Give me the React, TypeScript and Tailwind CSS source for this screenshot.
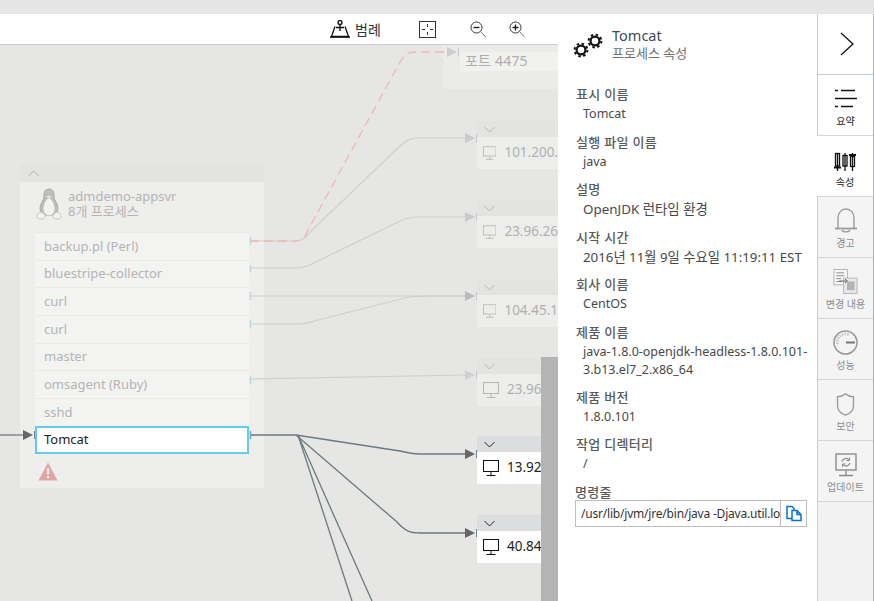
import React from "react";

const Monitor = ({ c }: { c: string }) => (
  <svg width="16" height="17" viewBox="0 0 16 17" fill="none" stroke={c} strokeWidth="1">
    <rect x="0.5" y="0.5" width="15" height="11" />
    <path d="M8 12v4M3.5 15.5h9" />
  </svg>
);

const nodes = [
  { top: 76, ip: "101.200.", dim: true },
  { top: 155, ip: "23.96.26", dim: true },
  { top: 234, ip: "104.45.1", dim: true },
  { top: 313, ip: "23.96.", dim: true },
  { top: 391, ip: "13.92.", dim: false },
  { top: 470, ip: "40.84.", dim: false },
];

const NodeCard = ({ top, ip, dim }: { top: number; ip: string; dim: boolean }) => (
  <div className="absolute left-[477px] w-[81px] overflow-hidden" style={{ top }}>
    <div className={`h-[16px] pl-[7px] flex items-center ${dim ? "bg-[#e3e3e1]" : "bg-[#dcdddf]"}`}>
      <svg width="11" height="7" viewBox="0 0 11 7" fill="none" stroke={dim ? "#b5b5b5" : "#222"} strokeWidth="1">
        <path d="M0.5 1 5.5 6 10.5 1" />
      </svg>
    </div>
    <div className={`h-[32px] pl-[6px] flex items-center gap-[8px] text-[13.5px] ${dim ? "bg-[#edeeec] text-[#b0b0b0]" : "bg-white text-[#222]"}`}>
      <Monitor c={dim ? "#b5b5b5" : "#111"} />
      <span className="whitespace-nowrap mb-[2px]">{ip}</span>
    </div>
  </div>
);

const rows = ["backup.pl (Perl)", "bluestripe-collector", "curl", "curl", "master", "omsagent (Ruby)", "sshd"];

const Arrow = ({ x, y, c }: { x: number; y: number; c: string }) => (
  <g>
    <path d={`M${x} ${y - 5}L${x + 10} ${y}L${x} ${y + 5}Z`} fill={c} />
    <path d={`M${x + 11.5} ${y - 4}V${y + 4}`} stroke={c === "#666" ? "#6d8594" : "#c2cad0"} strokeWidth="1" />
  </g>
);

const Graph = () => (
  <svg className="absolute left-0 top-0" width="558" height="556" viewBox="0 45 558 556" fill="none">
    <g stroke="#cfcfcd" strokeWidth="1.2">
      <path d="M250 241H295C304 241 306 236 310 232L400 146C408 139 412 138 420 138H466" />
      <path d="M250 268H295C305 268 310 265 320 260L398 222C406 218 410 217 420 217H466" />
      <path d="M250 296H466" />
      <path d="M250 324H298C306 324 310 322 318 320L405 298C412 296 418 296 430 296H466" />
      <path d="M250 379L466 375" />
    </g>
    <path d="M250 241H295C303 241 305 236 308 230L400 62C405 54 408 52 416 52H447" stroke="#efb9b7" strokeWidth="1.3" strokeDasharray="9 5" />
    <g stroke="#6b7a80" strokeWidth="1.3">
      <path d="M0 435H24" stroke="#777" />
      <path d="M250 435H296L400 451C408 453 412 454 420 454H466" />
      <path d="M296 435 397 522C405 531 410 533 420 533H466" />
      <path d="M298 435 352 601" />
      <path d="M298 435 372 601" />
    </g>
    <Arrow x={447} y={52} c="#cdcdcb" />
    <Arrow x={465} y={138} c="#c9cbca" />
    <Arrow x={465} y={217} c="#c9cbca" />
    <Arrow x={465} y={296} c="#b9bcbc" />
    <Arrow x={465} y={375} c="#d0d1d0" />
    <Arrow x={465} y={454} c="#666" />
    <Arrow x={465} y={533} c="#666" />
    <Arrow x={23} y={435} c="#666" />
    <g stroke="#c5d5dd" strokeWidth="1.5">
      <path d="M250.5 237V245M250.5 265V272M250.5 292V300M250.5 320V328M250.5 376V384" />
    </g>
    <path d="M250.5 431V439" stroke="#6ea6c0" strokeWidth="1.5" />
  </svg>
);

const Penguin = () => (
  <svg width="26" height="32" viewBox="0 0 26 32" fill="none">
    <path d="M13 1C9 1 8 4 8 7C8 11 7 12 5.5 15C4 18 3.5 21 5 24L8 27H18L21 24C22.5 21 22 18 20.5 15C19 12 18 11 18 7C18 4 17 1 13 1Z" fill="#bdbdbc" stroke="#aaaaaa" />
    <path d="M13 10C9.5 12 7.5 17 7.5 21C7.5 25 10 27 13 27C16 27 18.5 25 18.5 21C18.5 17 16.5 12 13 10Z" fill="#f2f2f1" />
    <path d="M10 8.5L13 10.5L16 8.5L13 7.5Z" fill="#e4e4e3" />
    <path d="M1 28C1.5 25 4 24 6 24L9.5 28C9 30.5 6 31.5 4 31C2 30.5 0.5 30 1 28ZM25 28C24.5 25 22 24 20 24L16.5 28C17 30.5 20 31.5 22 31C24 30.5 25.5 30 25 28Z" fill="#f2f2f1" stroke="#bdbdbd" strokeWidth="0.8" />
  </svg>
);

const Gears = () => (
  <svg width="32" height="26" viewBox="0 0 32 26" fill="none" stroke="#111">
    <circle cx="8" cy="17" r="4.4" strokeWidth="2.2" />
    <circle cx="8" cy="17" r="6.4" strokeWidth="2" strokeDasharray="2.5 2.5" />
    <circle cx="22" cy="8" r="4.4" strokeWidth="2.2" />
    <circle cx="22" cy="8" r="6.4" strokeWidth="2" strokeDasharray="2.5 2.5" />
  </svg>
);

const Zoom = ({ plus }: { plus?: boolean }) => (
  <svg width="16" height="17" viewBox="0 0 16 17" fill="none" stroke="#333" strokeWidth="1">
    <circle cx="6.5" cy="6.5" r="5.5" />
    <path d="M10.5 10.5 15.5 16" stroke="#777" />
    <path d={plus ? "M3.5 6.5h6M6.5 3.5v6" : "M3.5 6.5h6"} strokeWidth="1.4" stroke="#222" />
  </svg>
);

const props: [string, string[], number, string][] = [
  ["표시 이름", ["Tomcat"], 9, "text-[12.5px]"],
  ["실행 파일 이름", ["java"], 8, "text-[12.5px]"],
  ["설명", ["OpenJDK 런타임 환경"], 9, "text-[13.4px]"],
  ["시작 시간", ["2016년 11월 9일 수요일 11:19:11 EST"], 8, "text-[13.3px]"],
  ["회사 이름", ["CentOS"], 9, "text-[12.5px]"],
  ["제품 이름", ["java-1.8.0-openjdk-headless-1.8.0.101-", "3.b13.el7_2.x86_64"], 8, "text-[12.5px]"],
  ["제품 버전", ["1.8.0.101"], 8, "text-[12.5px]"],
  ["작업 디렉터리", ["/"], 9, "text-[12.5px]"],
];

const navI = "#9a9a9a";
const nav: { label: string; active?: boolean; white?: boolean; icon: React.ReactNode }[] = [
  {
    label: "요약",
    white: true,
    icon: (
      <svg width="22" height="22" viewBox="0 0 22 22" stroke="#111" strokeWidth="1.5">
        <path d="M0 1.5h3M6 1.5h14M0 9.5h22M0 17.5h3M6 17.5h12" />
      </svg>
    ),
  },
  {
    label: "속성",
    active: true,
    icon: (
      <svg width="22" height="20" viewBox="0 0 22 20" fill="none" stroke="#111" strokeWidth="1.3">
        <path d="M3.5 1V19M11 1V19M18.5 1V19" />
        <rect x="1.5" y="1.5" width="4" height="12.5" />
        <rect x="9" y="3.5" width="4" height="10.5" />
        <rect x="16.5" y="4.5" width="4" height="10" />
        <path d="M0 15.5H7M15 3H22" strokeWidth="1.8" />
      </svg>
    ),
  },
  {
    label: "경고",
    icon: (
      <svg width="22" height="25" viewBox="0 0 22 25" fill="none" stroke={navI} strokeWidth="1.4">
        <path d="M3 20V10C3 5 6.5 1 11 1S19 5 19 10V20" />
        <path d="M0 20.5H22" strokeWidth="1.8" />
        <path d="M7 22C8 24.5 14 24.5 15 22" />
      </svg>
    ),
  },
  {
    label: "변경 내용",
    icon: (
      <svg width="25" height="25" viewBox="0 0 25 26" fill="none">
        <rect x="0.5" y="0.5" width="14" height="16" fill="#f7f7f7" stroke="#b5b5b5" />
        <path d="M3 4h8M3 7h8M3 10h5M3 13h6" stroke="#888" />
        <rect x="10.5" y="9.5" width="14" height="16" fill="#e8e8e8" stroke="#b5b5b5" />
        <rect x="14" y="13" width="8" height="9" fill="#b4b4b4" />
        <path d="M6 12.5h8M12 10.5l2.5 2-2.5 2" stroke="#666" />
      </svg>
    ),
  },
  {
    label: "성능",
    icon: (
      <svg width="25" height="25" viewBox="0 0 25 25" fill="none" stroke={navI}>
        <circle cx="12.5" cy="12.5" r="11.5" strokeWidth="1.6" />
        <path d="M4.5 14A8 8 0 0 1 16 5" strokeWidth="2.5" strokeDasharray="1.5 1.2" stroke="#c4c4c4" />
        <path d="M13 12.5H22" strokeWidth="2" stroke="#777" />
      </svg>
    ),
  },
  {
    label: "보안",
    icon: (
      <svg width="19" height="23" viewBox="0 0 20 26" fill="none" stroke={navI} strokeWidth="1.5">
        <path d="M1 4C4 4 7 3.5 10 1C13 3.5 16 4 19 4V15C19 20 14 23.5 10 25C6 23.5 1 20 1 15Z" />
      </svg>
    ),
  },
  {
    label: "업데이트",
    icon: (
      <svg width="22" height="24" viewBox="0 0 22 24" fill="none" stroke="#8a8a8a">
        <rect x="1" y="1" width="20" height="16" strokeWidth="1.4" />
        <path d="M11 17.5V22M4 22.5H18" strokeWidth="1.4" />
        <path d="M7 8.5A4 4 0 0 1 14 7M15 10A4 4 0 0 1 8 11.5" strokeWidth="1.2" />
        <path d="M14.5 4.5V7.5H11.5M7.5 14V11H10.5" strokeWidth="1" />
      </svg>
    ),
  },
];

export default function App() {
  return (
    <div className="w-[874px] h-[601px] flex flex-col overflow-hidden bg-[#e5e5e5] font-['Noto_Sans','Noto_Sans_CJK_KR',sans-serif]">
      <div className="h-[14px] bg-[#e5e5e5]" />
      <div className="flex-1 flex min-h-0">
        <div className="w-[558px] flex flex-col">
          <div className="h-[31px] bg-white border-b border-[#c8ced4] flex items-center pl-[330px] text-[#333]">
            <svg width="20" height="18" viewBox="0 0 20 18" fill="none" stroke="#111" strokeWidth="1.3">
              <circle cx="10" cy="2.5" r="2" />
              <path d="M10 5V11M6 7.5H14" />
              <path d="M5 6.5 1.5 16.5H18.5L15 6.5" />
              <path d="M0 17H20" strokeWidth="1.6" />
            </svg>
            <span className="ml-[5px] text-[14px] font-['Noto_Sans_CJK_KR',sans-serif] w-[38px]">범례</span>
            <svg className="ml-[26px]" width="17" height="17" viewBox="0 0 17 17" fill="none" stroke="#333">
              <rect x="0.5" y="0.5" width="16" height="16" />
              <path d="M8.5 3v3M8.5 11v3M3 8.5h3M11 8.5h3" strokeWidth="1" />
            </svg>
            <span className="ml-[34px]"><Zoom /></span>
            <span className="ml-[23px]"><Zoom plus /></span>
          </div>
          <div className="relative flex-1 bg-[#e6e6e4] overflow-hidden">
            <div className="absolute left-[443px] top-0 w-[115px] h-[44px] bg-[#ebebe9] pl-[17px] pt-[7px]">
              <div className="h-[19px] bg-[#f1f1f0] pl-[5px] pb-[2px] flex items-center text-[14px] tracking-[0.2px] text-[#aeaeae]">포트 4475</div>
            </div>
            {nodes.map((n) => (
              <NodeCard key={n.ip} {...n} />
            ))}
            <div className="absolute left-[20px] top-[120px] w-[244px] h-[323px] bg-[#eeeeed] flex flex-col">
              <div className="h-[17px] bg-[#e3e3e1] pl-[8px] flex items-center">
                <svg width="11" height="7" viewBox="0 0 11 7" fill="none" stroke="#b0b0b0">
                  <path d="M0.5 6 5.5 1 10.5 6" />
                </svg>
              </div>
              <div className="flex pl-[16px] pt-[6px] h-[50px]">
                <Penguin />
                <div className="ml-[6px] mt-[1px] text-[13px] leading-[15px] text-[#b4b4b4]">
                  <div className="h-[15px]">admdemo-appsvr</div>
                  <div className="h-[15px]">8개 프로세스</div>
                </div>
              </div>
              <div className="ml-[15px] w-[214px]">
                {rows.map((r, i) => (
                  <div key={i} className="h-[27.7px] bg-[#f3f3f2] border-t border-[#e8e8e6] pl-[9px] flex items-center text-[13px] text-[#b4b4b4]">
                    {r}
                  </div>
                ))}
                <div className="h-[28px] bg-white border-2 border-[#5fcdec] pl-[7px] flex items-center text-[13px] text-[#222]">Tomcat</div>
              </div>
              <svg className="ml-[18px] mt-[8px]" width="20" height="19" viewBox="0 0 20 19">
                <path d="M10 0.5 19.5 18.5H0.5Z" fill="#e0a5a5" />
                <path d="M10 6V12.5M10 14V16" stroke="#f4eeee" strokeWidth="2.2" />
              </svg>
            </div>
            <Graph />
            <div className="absolute left-[541px] top-[312px] w-[17px] bottom-0 bg-[#b4b4b4]" />
          </div>
        </div>
        <div className="w-[259px] bg-white pl-[18px] flex flex-col">
          <div className="flex h-[70px] pt-[19px] -ml-[3px]">
            <Gears />
            <div className="ml-[7px] -mt-[8px]">
              <div className="text-[14.5px] leading-[20px] text-[#3d4a57]">Tomcat</div>
              <div className="text-[13px] leading-[16px] text-[#707070]">프로세스 속성</div>
            </div>
          </div>
          {props.map(([l, vs, mb, size]) => (
            <div key={l} style={{ marginBottom: mb }}>
              <div className="text-[13px] tracking-[0.3px] leading-[20px] font-medium text-[#5a5a5a]">{l}</div>
              <div className={`mt-[1px] pl-[7px] ${size} leading-[18px] text-[#484848] whitespace-nowrap`}>
                {vs.map((v) => (
                  <div key={v}>{v}</div>
                ))}
              </div>
            </div>
          ))}
          <div className="mt-[2px] -ml-[1px] text-[13px] tracking-[0.3px] leading-[16px] font-medium text-[#5a5a5a]">명령줄</div>
          <div className="-ml-[1px] w-[232px] h-[27px] border border-[#bdbdbd] flex items-center text-[12px] tracking-[-0.2px] text-[#333]">
            <div className="w-[204px] pl-[5px] pr-[3px] overflow-hidden whitespace-nowrap">/usr/lib/jvm/jre/bin/java -Djava.util.lo</div>
            <div className="flex-1 h-full border-l border-[#bdbdbd] flex items-center justify-center">
              <svg width="16" height="17" viewBox="0 0 16 16" fill="none" stroke="#0a72c9" strokeWidth="1.5">
                <path d="M6 13H1V1H6L8 3V5" />
                <path d="M6 5H11L15 9V15H6ZM11 5V9H15" />
              </svg>
            </div>
          </div>
        </div>
        <div className="w-[57px] flex flex-col bg-[#f2f2f2] border-r border-[#a9b4bc]">
          <div className="h-[61px] bg-white border-l border-b border-[#c8ced4] flex items-center justify-center pl-[3px]">
            <svg width="14" height="24" viewBox="0 0 14 24" fill="none" stroke="#111" strokeWidth="1.3">
              <path d="M1 1 13 12 1 23" />
            </svg>
          </div>
          {nav.map((n) => (
            <div
              key={n.label}
              className={`h-[61px] flex flex-col items-center border-b border-[#d4d7da] ${n.active ? "bg-white" : n.white ? "bg-white border-l border-l-[#c8ced4]" : "bg-[#f4f4f4] border-l border-l-[#c8ced4]"}`}
            >
              <div className="h-[36px] flex items-end justify-center">{n.icon}</div>
              <div className={`mt-[3px] text-[10px] leading-[14px] whitespace-nowrap ${n.active || n.white ? "text-[#222]" : "text-[#8c8c8c]"}`}>{n.label}</div>
            </div>
          ))}
          <div className="flex-1 border-l border-[#c8ced4]" />
        </div>
      </div>
    </div>
  );
}
